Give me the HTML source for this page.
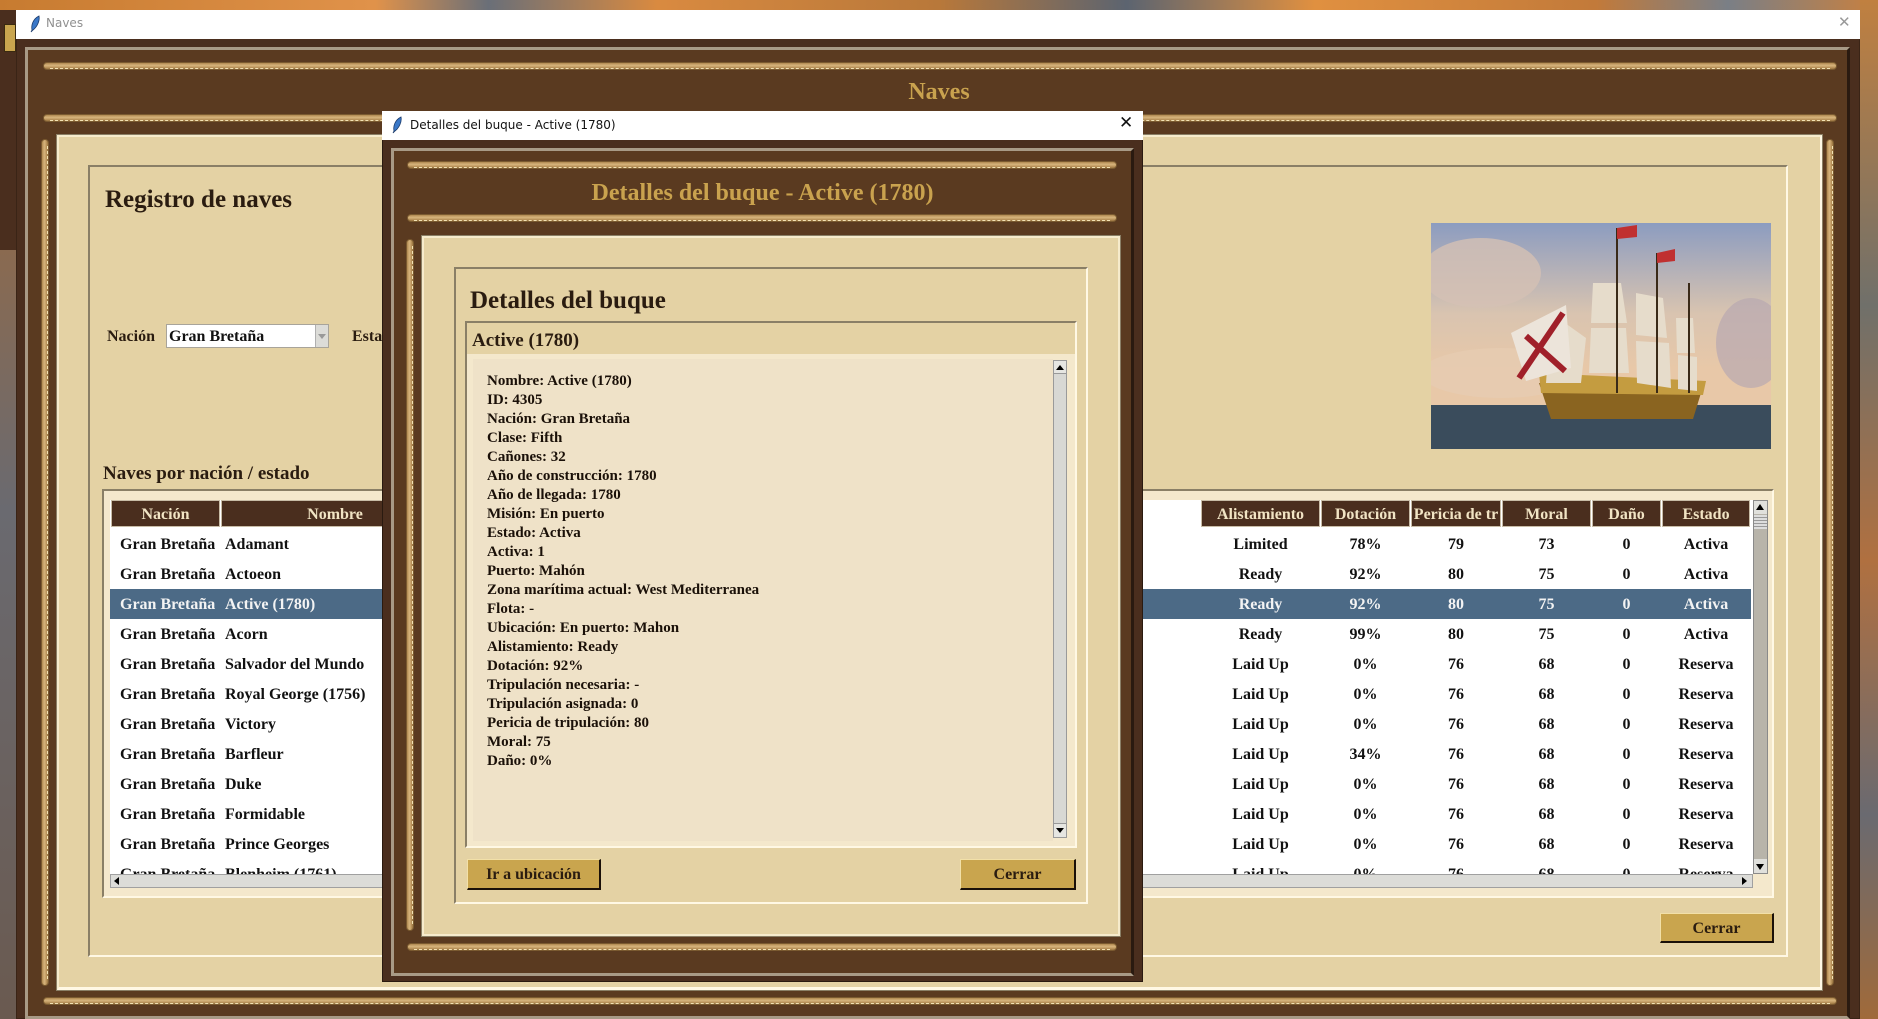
<!DOCTYPE html>
<html><head><meta charset="utf-8"><style>
*{margin:0;padding:0;box-sizing:border-box}
body{width:1878px;height:1019px;overflow:hidden;position:relative;background:#6b5a4a;font-family:"Liberation Serif",serif;}
.a{position:absolute}
.rope{position:absolute;height:8px;background:linear-gradient(#b08850,#d6b47c 40%,#c9a36a 60%,#9a7440);border:1px solid #7a5a30;border-radius:4px}
.rope:after{content:"";position:absolute;left:6px;right:6px;bottom:0px;border-bottom:1px dashed #f3e2b4}
.vrope{position:absolute;width:8px;background:linear-gradient(90deg,#b08850,#d6b47c 40%,#c9a36a 60%,#9a7440);border:1px solid #7a5a30;border-radius:4px}
.vrope:after{content:"";position:absolute;top:6px;bottom:6px;right:0;border-right:1px dashed #f3e2b4}
.sunk{border-top:2px solid #8a7f66;border-left:2px solid #8a7f66;border-right:2px solid #fff8e4;border-bottom:2px solid #fff8e4}
.b{font-weight:bold}
.th{position:absolute;top:0;height:27px;background:#4a2e1e;color:#f1e4c4;font-weight:bold;font-size:16px;text-align:center;line-height:27px;border:1px solid #c8bca6;white-space:nowrap;overflow:hidden}
.row{position:absolute;left:0;width:1640px;height:30px;font-size:16px;font-weight:bold;line-height:32px;color:#111}
.row span{position:absolute;text-align:center;white-space:nowrap}
.sel{background:#4c6a86;color:#f3f3f3}
.btn{position:absolute;background:#c9a54e;font-weight:bold;font-size:16px;text-align:center;color:#2a1c10;border-top:1px solid #f2e0a8;border-left:1px solid #f2e0a8;border-right:2px solid #1a1008;border-bottom:2px solid #1a1008}
</style></head><body>
<!-- wallpaper -->
<div class="a" style="left:0;top:0;width:1878px;height:10px;background:linear-gradient(90deg,#c77b30,#e0924a 20%,#6a6f78 26%,#d98a40 35%,#b8783a 50%,#5c6470 60%,#e09040 70%,#c27a3a 85%,#7a7f86 92%,#c88040)"></div>
<div class="a" style="left:1860px;top:0;width:18px;height:1019px;background:linear-gradient(#c08040,#70706a 30%,#b07040 55%,#6a6a70 80%,#a06a3a)"></div>
<div class="a" style="left:0;top:10px;width:16px;height:1009px;background:linear-gradient(#4a2e1e 0 240px,#8a6a50 240px,#6a6a70 500px,#6a5a50)"></div>
<div class="a" style="left:4px;top:24px;width:12px;height:28px;background:#c9a54e;border:1px solid #3a2a10"></div>

<!-- main window -->
<div class="a" style="left:16px;top:10px;width:1844px;height:1009px;background:#4a2e1e;border:1px solid #3a2416"></div>
<div class="a" style="left:16px;top:10px;width:1844px;height:29px;background:#fff"></div>
<svg class="a" style="left:29px;top:15px" width="12" height="18" viewBox="0 0 12 18"><path d="M10 1 C4 4 2 10 3 15 L2 17 L4 15 C8 12 11 6 10 1Z" fill="#3a78c8" stroke="#1a3a6a" stroke-width="0.8"/></svg>
<div class="a" style="left:46px;top:16px;font-family:'DejaVu Sans',sans-serif;font-size:12px;color:#909090">Naves</div>
<div class="a" style="left:1838px;top:13px;font-family:'DejaVu Sans',sans-serif;font-size:15px;color:#999">✕</div>
<div class="a" style="left:25px;top:47px;width:1825px;height:972px;border:3px solid #a89a86;border-right-color:#2a1a10;background:#5a3a20"></div>
<div class="rope" style="left:43px;top:62px;width:1794px"></div>
<div class="rope" style="left:43px;top:114px;width:1794px"></div>
<div class="a b" style="left:0;top:79px;width:1878px;text-align:center;font-size:24px;color:#c9a24e">Naves</div>
<div class="vrope" style="left:41px;top:139px;height:847px"></div>
<div class="vrope" style="left:1826px;top:139px;height:847px"></div>
<div class="rope" style="left:43px;top:997px;width:1794px"></div>
<div class="a" style="left:57px;top:135px;width:1765px;height:855px;background:#e4d2a4;border-top:2px solid #f6ebcc;border-left:2px solid #f6ebcc;border-right:2px solid #fff8e4;border-bottom:3px solid #fff8e4;outline:1px solid #8a7f66"></div>
<div class="a sunk" style="left:88px;top:165px;width:1700px;height:792px;background:#e4d2a4"></div>
<div class="a b" style="left:105px;top:186px;font-size:25px;color:#2a1c10">Registro de naves</div>
<div class="a b" style="left:107px;top:328px;font-size:16px;color:#2a1c10">Nación</div>
<div class="a" style="left:166px;top:324px;width:163px;height:24px;background:#fff;border:1px solid #a8a49a"></div>
<div class="a b" style="left:169px;top:328px;font-size:16px;color:#111">Gran Bretaña</div>
<div class="a" style="left:315px;top:325px;width:13px;height:22px;background:#dcdcd8;border-left:1px solid #b0b0b0"></div>
<div class="a" style="left:318px;top:334px;width:0;height:0;border-left:4px solid transparent;border-right:4px solid transparent;border-top:5px solid #999"></div>
<div class="a b" style="left:352px;top:328px;font-size:16px;color:#2a1c10">Esta</div>
<!-- ship image -->
<svg class="a" style="left:1431px;top:223px" width="340" height="226" viewBox="0 0 340 226">
<defs><linearGradient id="sk" x1="0" y1="0" x2="0" y2="1"><stop offset="0" stop-color="#8c9cc0"/><stop offset=".5" stop-color="#d9c4b0"/><stop offset=".8" stop-color="#e8c8a8"/></linearGradient></defs>
<rect width="340" height="182" fill="url(#sk)"/>
<ellipse cx="50" cy="50" rx="60" ry="35" fill="#d4c0b4" opacity=".8"/><ellipse cx="70" cy="150" rx="80" ry="25" fill="#e6ccb2" opacity=".8"/><ellipse cx="320" cy="120" rx="35" ry="45" fill="#b8a8b0" opacity=".7"/>
<rect y="182" width="340" height="44" fill="#3a4c5c"/>
<path d="M108 160 L270 170 L262 196 L120 196Z" fill="#8a6420"/>
<path d="M108 150 L275 158 L272 172 L110 170Z" fill="#c49c40"/>
<path d="M162 60 L190 60 L196 100 L160 100Z M160 105 L195 105 L198 150 L158 150Z M205 70 L232 75 L236 115 L205 112Z M205 118 L238 120 L240 165 L206 160Z M245 95 L262 95 L264 130 L246 130Z M247 132 L266 134 L266 168 L247 166Z M120 90 L155 115 L150 160 L115 160Z" fill="#e6dccb"/>
<path d="M186 5 L186 170 M226 30 L226 170 M258 60 L258 170" stroke="#3a2a18" stroke-width="2"/>
<path d="M80 110 L135 82 L140 145 L95 158Z" fill="#ece4da"/>
<path d="M88 155 L132 90 M95 113 L134 148" stroke="#a0202a" stroke-width="6"/>
<path d="M186 5 L206 2 L206 14 L186 16Z M226 30 L244 26 L244 38 L226 40Z" fill="#c03030"/>
</svg>
<div class="a b" style="left:103px;top:463px;font-size:19px;color:#2a1c10">Naves por nación / estado</div>
<!-- table -->
<div class="a sunk" style="left:102px;top:489px;width:1672px;height:409px;background:#f4e8cc"></div>
<div class="a" style="left:110px;top:500px;width:1643px;height:375px;background:#fff;overflow:hidden">
 <div class="th" style="left:1px;width:109px">Nación</div>
 <div class="th" style="left:111px;width:228px">Nombre</div>
 <div class="th" style="left:1091px;width:119px">Alistamiento</div>
 <div class="th" style="left:1211px;width:89px">Dotación</div>
 <div class="th" style="left:1301px;width:90px">Pericia de tr</div>
 <div class="th" style="left:1392px;width:89px">Moral</div>
 <div class="th" style="left:1482px;width:69px">Daño</div>
 <div class="th" style="left:1552px;width:88px">Estado</div>
</div>
<div class="a" style="left:110px;top:529px;width:1643px;height:345px;overflow:hidden">
<div class="row" style="top:0"><span style="left:10px">Gran Bretaña</span><span style="left:115px">Adamant</span><span style="left:1091px;width:119px">Limited</span><span style="left:1211px;width:89px">78%</span><span style="left:1301px;width:90px">79</span><span style="left:1392px;width:89px">73</span><span style="left:1482px;width:69px">0</span><span style="left:1552px;width:88px">Activa</span></div>
<div class="row" style="top:30px"><span style="left:10px">Gran Bretaña</span><span style="left:115px">Actoeon</span><span style="left:1091px;width:119px">Ready</span><span style="left:1211px;width:89px">92%</span><span style="left:1301px;width:90px">80</span><span style="left:1392px;width:89px">75</span><span style="left:1482px;width:69px">0</span><span style="left:1552px;width:88px">Activa</span></div>
<div class="row sel" style="top:60px;width:1641px"><span style="left:10px">Gran Bretaña</span><span style="left:115px">Active (1780)</span><span style="left:1091px;width:119px">Ready</span><span style="left:1211px;width:89px">92%</span><span style="left:1301px;width:90px">80</span><span style="left:1392px;width:89px">75</span><span style="left:1482px;width:69px">0</span><span style="left:1552px;width:88px">Activa</span></div>
<div class="row" style="top:90px"><span style="left:10px">Gran Bretaña</span><span style="left:115px">Acorn</span><span style="left:1091px;width:119px">Ready</span><span style="left:1211px;width:89px">99%</span><span style="left:1301px;width:90px">80</span><span style="left:1392px;width:89px">75</span><span style="left:1482px;width:69px">0</span><span style="left:1552px;width:88px">Activa</span></div>
<div class="row" style="top:120px"><span style="left:10px">Gran Bretaña</span><span style="left:115px">Salvador del Mundo</span><span style="left:1091px;width:119px">Laid Up</span><span style="left:1211px;width:89px">0%</span><span style="left:1301px;width:90px">76</span><span style="left:1392px;width:89px">68</span><span style="left:1482px;width:69px">0</span><span style="left:1552px;width:88px">Reserva</span></div>
<div class="row" style="top:150px"><span style="left:10px">Gran Bretaña</span><span style="left:115px">Royal George (1756)</span><span style="left:1091px;width:119px">Laid Up</span><span style="left:1211px;width:89px">0%</span><span style="left:1301px;width:90px">76</span><span style="left:1392px;width:89px">68</span><span style="left:1482px;width:69px">0</span><span style="left:1552px;width:88px">Reserva</span></div>
<div class="row" style="top:180px"><span style="left:10px">Gran Bretaña</span><span style="left:115px">Victory</span><span style="left:1091px;width:119px">Laid Up</span><span style="left:1211px;width:89px">0%</span><span style="left:1301px;width:90px">76</span><span style="left:1392px;width:89px">68</span><span style="left:1482px;width:69px">0</span><span style="left:1552px;width:88px">Reserva</span></div>
<div class="row" style="top:210px"><span style="left:10px">Gran Bretaña</span><span style="left:115px">Barfleur</span><span style="left:1091px;width:119px">Laid Up</span><span style="left:1211px;width:89px">34%</span><span style="left:1301px;width:90px">76</span><span style="left:1392px;width:89px">68</span><span style="left:1482px;width:69px">0</span><span style="left:1552px;width:88px">Reserva</span></div>
<div class="row" style="top:240px"><span style="left:10px">Gran Bretaña</span><span style="left:115px">Duke</span><span style="left:1091px;width:119px">Laid Up</span><span style="left:1211px;width:89px">0%</span><span style="left:1301px;width:90px">76</span><span style="left:1392px;width:89px">68</span><span style="left:1482px;width:69px">0</span><span style="left:1552px;width:88px">Reserva</span></div>
<div class="row" style="top:270px"><span style="left:10px">Gran Bretaña</span><span style="left:115px">Formidable</span><span style="left:1091px;width:119px">Laid Up</span><span style="left:1211px;width:89px">0%</span><span style="left:1301px;width:90px">76</span><span style="left:1392px;width:89px">68</span><span style="left:1482px;width:69px">0</span><span style="left:1552px;width:88px">Reserva</span></div>
<div class="row" style="top:300px"><span style="left:10px">Gran Bretaña</span><span style="left:115px">Prince Georges</span><span style="left:1091px;width:119px">Laid Up</span><span style="left:1211px;width:89px">0%</span><span style="left:1301px;width:90px">76</span><span style="left:1392px;width:89px">68</span><span style="left:1482px;width:69px">0</span><span style="left:1552px;width:88px">Reserva</span></div>
<div class="row" style="top:330px"><span style="left:10px">Gran Bretaña</span><span style="left:115px">Blenheim (1761)</span><span style="left:1091px;width:119px">Laid Up</span><span style="left:1211px;width:89px">0%</span><span style="left:1301px;width:90px">76</span><span style="left:1392px;width:89px">68</span><span style="left:1482px;width:69px">0</span><span style="left:1552px;width:88px">Reserva</span></div>
</div>
<!-- scrollbars -->
<div class="a" style="left:1753px;top:500px;width:15px;height:374px;background:#b8b4aa;border:1px solid #8a8a8a"></div>
<div class="a" style="left:1754px;top:501px;width:13px;height:13px;background:#e0e0dc"></div>
<div class="a" style="left:1756px;top:504px;border-left:4px solid transparent;border-right:4px solid transparent;border-bottom:6px solid #000"></div>
<div class="a" style="left:1754px;top:515px;width:13px;height:14px;background:repeating-linear-gradient(#ddd 0 2px,#999 2px 3px)"></div>
<div class="a" style="left:1754px;top:859px;width:13px;height:14px;background:#e0e0dc"></div>
<div class="a" style="left:1756px;top:864px;border-left:4px solid transparent;border-right:4px solid transparent;border-top:6px solid #000"></div>
<div class="a" style="left:110px;top:874px;width:1643px;height:14px;background:#dcdcd8;border:1px solid #a0a0a0"></div>
<div class="a" style="left:114px;top:877px;border-top:4px solid transparent;border-bottom:4px solid transparent;border-right:5px solid #000"></div>
<div class="a" style="left:1742px;top:877px;border-top:4px solid transparent;border-bottom:4px solid transparent;border-left:5px solid #000"></div>
<div class="btn" style="left:1660px;top:913px;width:114px;height:30px;line-height:29px">Cerrar</div>

<!-- dialog -->
<div class="a" style="left:382px;top:111px;width:761px;height:871px;background:#4a2e1e;border:1px solid #2a1a10"></div>
<div class="a" style="left:382px;top:111px;width:761px;height:29px;background:#fff"></div>
<svg class="a" style="left:391px;top:116px" width="12" height="18" viewBox="0 0 12 18"><path d="M10 1 C4 4 2 10 3 15 L2 17 L4 15 C8 12 11 6 10 1Z" fill="#3a78c8" stroke="#1a3a6a" stroke-width="0.8"/></svg>
<div class="a" style="left:410px;top:118px;font-family:'DejaVu Sans',sans-serif;font-size:12px;color:#111">Detalles del buque - Active (1780)</div>
<div class="a" style="left:1119px;top:113px;font-family:'DejaVu Sans',sans-serif;font-size:17px;color:#111">✕</div>
<div class="a" style="left:391px;top:148px;width:743px;height:828px;border:3px solid #a89a86;border-right-color:#2a1a10;background:#5a3a20"></div>
<div class="rope" style="left:407px;top:161px;width:710px"></div>
<div class="rope" style="left:407px;top:214px;width:710px"></div>
<div class="a b" style="left:382px;top:180px;width:761px;text-align:center;font-size:24px;color:#c9a24e">Detalles del buque - Active (1780)</div>
<div class="vrope" style="left:406px;top:239px;height:692px"></div>
<div class="rope" style="left:407px;top:943px;width:710px"></div>
<div class="a" style="left:422px;top:236px;width:698px;height:700px;background:#e4d2a4;border:2px solid #f6ebcc;outline:1px solid #8a7f66"></div>
<div class="a sunk" style="left:454px;top:267px;width:634px;height:637px;background:#e4d2a4"></div>
<div class="a b" style="left:470px;top:287px;font-size:25px;color:#2a1c10">Detalles del buque</div>
<div class="a sunk" style="left:465px;top:321px;width:612px;height:527px;background:#f4e8cc"></div>
<div class="a" style="left:467px;top:323px;width:608px;height:31px;background:#e4d2a4"></div>
<div class="a b" style="left:472px;top:330px;font-size:19px;color:#2a1c10">Active (1780)</div>
<div class="a" style="left:473px;top:359px;width:580px;height:482px;background:#efe2c8"></div>
<div class="a b" style="left:487px;top:372px;font-size:15px;line-height:19px;color:#1a1008">Nombre: Active (1780)<br>ID: 4305<br>Nación: Gran Bretaña<br>Clase: Fifth<br>Cañones: 32<br>Año de construcción: 1780<br>Año de llegada: 1780<br>Misión: En puerto<br>Estado: Activa<br>Activa: 1<br>Puerto: Mahón<br>Zona marítima actual: West Mediterranea<br>Flota: -<br>Ubicación: En puerto: Mahon<br>Alistamiento: Ready<br>Dotación: 92%<br>Tripulación necesaria: -<br>Tripulación asignada: 0<br>Pericia de tripulación: 80<br>Moral: 75<br>Daño: 0%</div>
<div class="a" style="left:1053px;top:360px;width:14px;height:478px;background:#d8d8d4;border:1px solid #9a9a9a"></div>
<div class="a" style="left:1054px;top:361px;width:12px;height:13px;background:#e6e6e2;border-bottom:1px solid #999"></div>
<div class="a" style="left:1056px;top:365px;border-left:4px solid transparent;border-right:4px solid transparent;border-bottom:5px solid #000"></div>
<div class="a" style="left:1054px;top:823px;width:12px;height:14px;background:#e6e6e2;border-top:1px solid #999"></div>
<div class="a" style="left:1056px;top:828px;border-left:4px solid transparent;border-right:4px solid transparent;border-top:5px solid #000"></div>
<div class="btn" style="left:467px;top:859px;width:134px;height:31px;line-height:30px">Ir a ubicación</div>
<div class="btn" style="left:960px;top:859px;width:116px;height:31px;line-height:30px">Cerrar</div>
</body></html>
